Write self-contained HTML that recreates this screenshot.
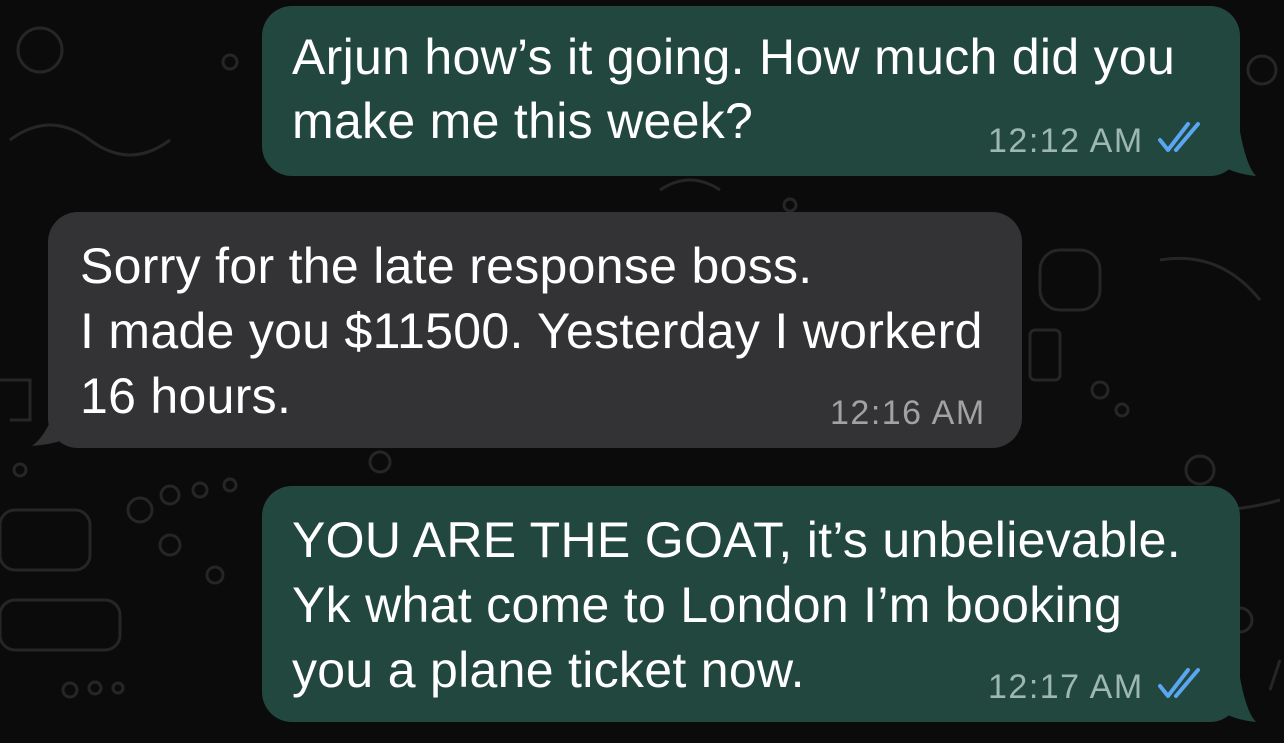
<!DOCTYPE html>
<html><head><meta charset="utf-8"><style>
html,body{margin:0;padding:0;width:1284px;height:743px;overflow:hidden;background:#0b0b0b;font-family:"Liberation Sans",sans-serif;}
.b{position:absolute;border-radius:30px;color:#fff;font-size:50px;line-height:64px;letter-spacing:0.3px;}
.g{background:#22473f;}
.d{background:#333335;}
.t{position:absolute;font-size:34px;line-height:34px;white-space:nowrap;letter-spacing:1.5px;}
.l{position:absolute;left:30px;white-space:nowrap;}
svg.bg{position:absolute;left:0;top:0}
</style></head><body>
<svg class="bg" width="1284" height="743" fill="none" stroke="#262626" stroke-width="3">
<circle cx="230" cy="62" r="7"/><circle cx="40" cy="50" r="22"/><circle cx="1262" cy="70" r="14"/>
<path d="M10 140 q40 -30 80 0 t80 0"/><path d="M0 380 h30 v40 h-20"/>
<circle cx="140" cy="510" r="12"/><circle cx="170" cy="495" r="9"/><circle cx="200" cy="490" r="7"/><circle cx="230" cy="485" r="6"/>
<rect x="0" y="510" width="90" height="60" rx="15"/><rect x="0" y="600" width="120" height="50" rx="15"/>
<circle cx="20" cy="470" r="6"/><circle cx="170" cy="545" r="10"/><circle cx="215" cy="575" r="8"/>
<circle cx="70" cy="690" r="7"/><circle cx="95" cy="688" r="6"/><circle cx="118" cy="688" r="5"/>
<circle cx="380" cy="462" r="10"/><circle cx="1100" cy="390" r="8"/><circle cx="1122" cy="410" r="6"/>
<rect x="1040" y="250" width="60" height="60" rx="20"/><circle cx="1200" cy="470" r="14"/><path d="M1160 260 q60 -10 100 40"/>
<rect x="1030" y="330" width="30" height="50" rx="5"/><path d="M660 190 q30 -20 60 0"/><circle cx="790" cy="205" r="6"/>
<path d="M1150 500 q60 20 130 0"/><circle cx="1240" cy="620" r="12"/><path d="M1270 690 l10 -30"/>
</svg>

<svg style="position:absolute;left:1200px;top:120px" width="70" height="60"><path d="M0 0 H38 Q45 45 56 56 Q35 54 20 45 Q10 56 0 56 Z" fill="#22473f"/></svg>
<div class="b g" style="left:262px;top:6px;width:978px;height:170px;">
<div class="l" style="top:19px">Arjun how’s it going. How much did you</div>
<div class="l" style="top:83px">make me this week?</div>
<div class="t" style="left:726px;top:118px;color:#9cb8b0">12:12 AM</div>
<svg style="position:absolute;left:894px;top:114px" width="52" height="36" fill="none" stroke="#5aa6f0" stroke-width="4" stroke-linecap="round" stroke-linejoin="round"><path d="M4 20 L12 30 L32 4"/><path d="M20 30 L42 4"/></svg>
</div>

<svg style="position:absolute;left:28px;top:390px" width="70" height="60"><path d="M70 0 H30 Q25 40 4 56 Q30 54 48 45 Q58 58 70 58 Z" fill="#333335"/></svg>
<div class="b d" style="left:48px;top:212px;width:974px;height:236px;">
<div class="l" style="top:22px;left:32px">Sorry for the late response boss.</div>
<div class="l" style="top:87px;left:32px">I made you $11500. Yesterday I workerd</div>
<div class="l" style="top:152px;left:32px">16 hours.</div>
<div class="t" style="left:782px;top:184px;color:#a2a2a4">12:16 AM</div>
</div>

<svg style="position:absolute;left:1200px;top:666px" width="70" height="60"><path d="M0 0 H38 Q45 45 56 56 Q35 54 20 45 Q10 56 0 56 Z" fill="#22473f"/></svg>
<div class="b g" style="left:262px;top:486px;width:978px;height:236px;">
<div class="l" style="top:22px">YOU ARE THE GOAT, it’s unbelievable.</div>
<div class="l" style="top:87px">Yk what come to London I’m booking</div>
<div class="l" style="top:152px">you a plane ticket now.</div>
<div class="t" style="left:726px;top:184px;color:#9cb8b0">12:17 AM</div>
<svg style="position:absolute;left:894px;top:180px" width="52" height="36" fill="none" stroke="#5aa6f0" stroke-width="4" stroke-linecap="round" stroke-linejoin="round"><path d="M4 20 L12 30 L32 4"/><path d="M20 30 L42 4"/></svg>
</div>
</body></html>
